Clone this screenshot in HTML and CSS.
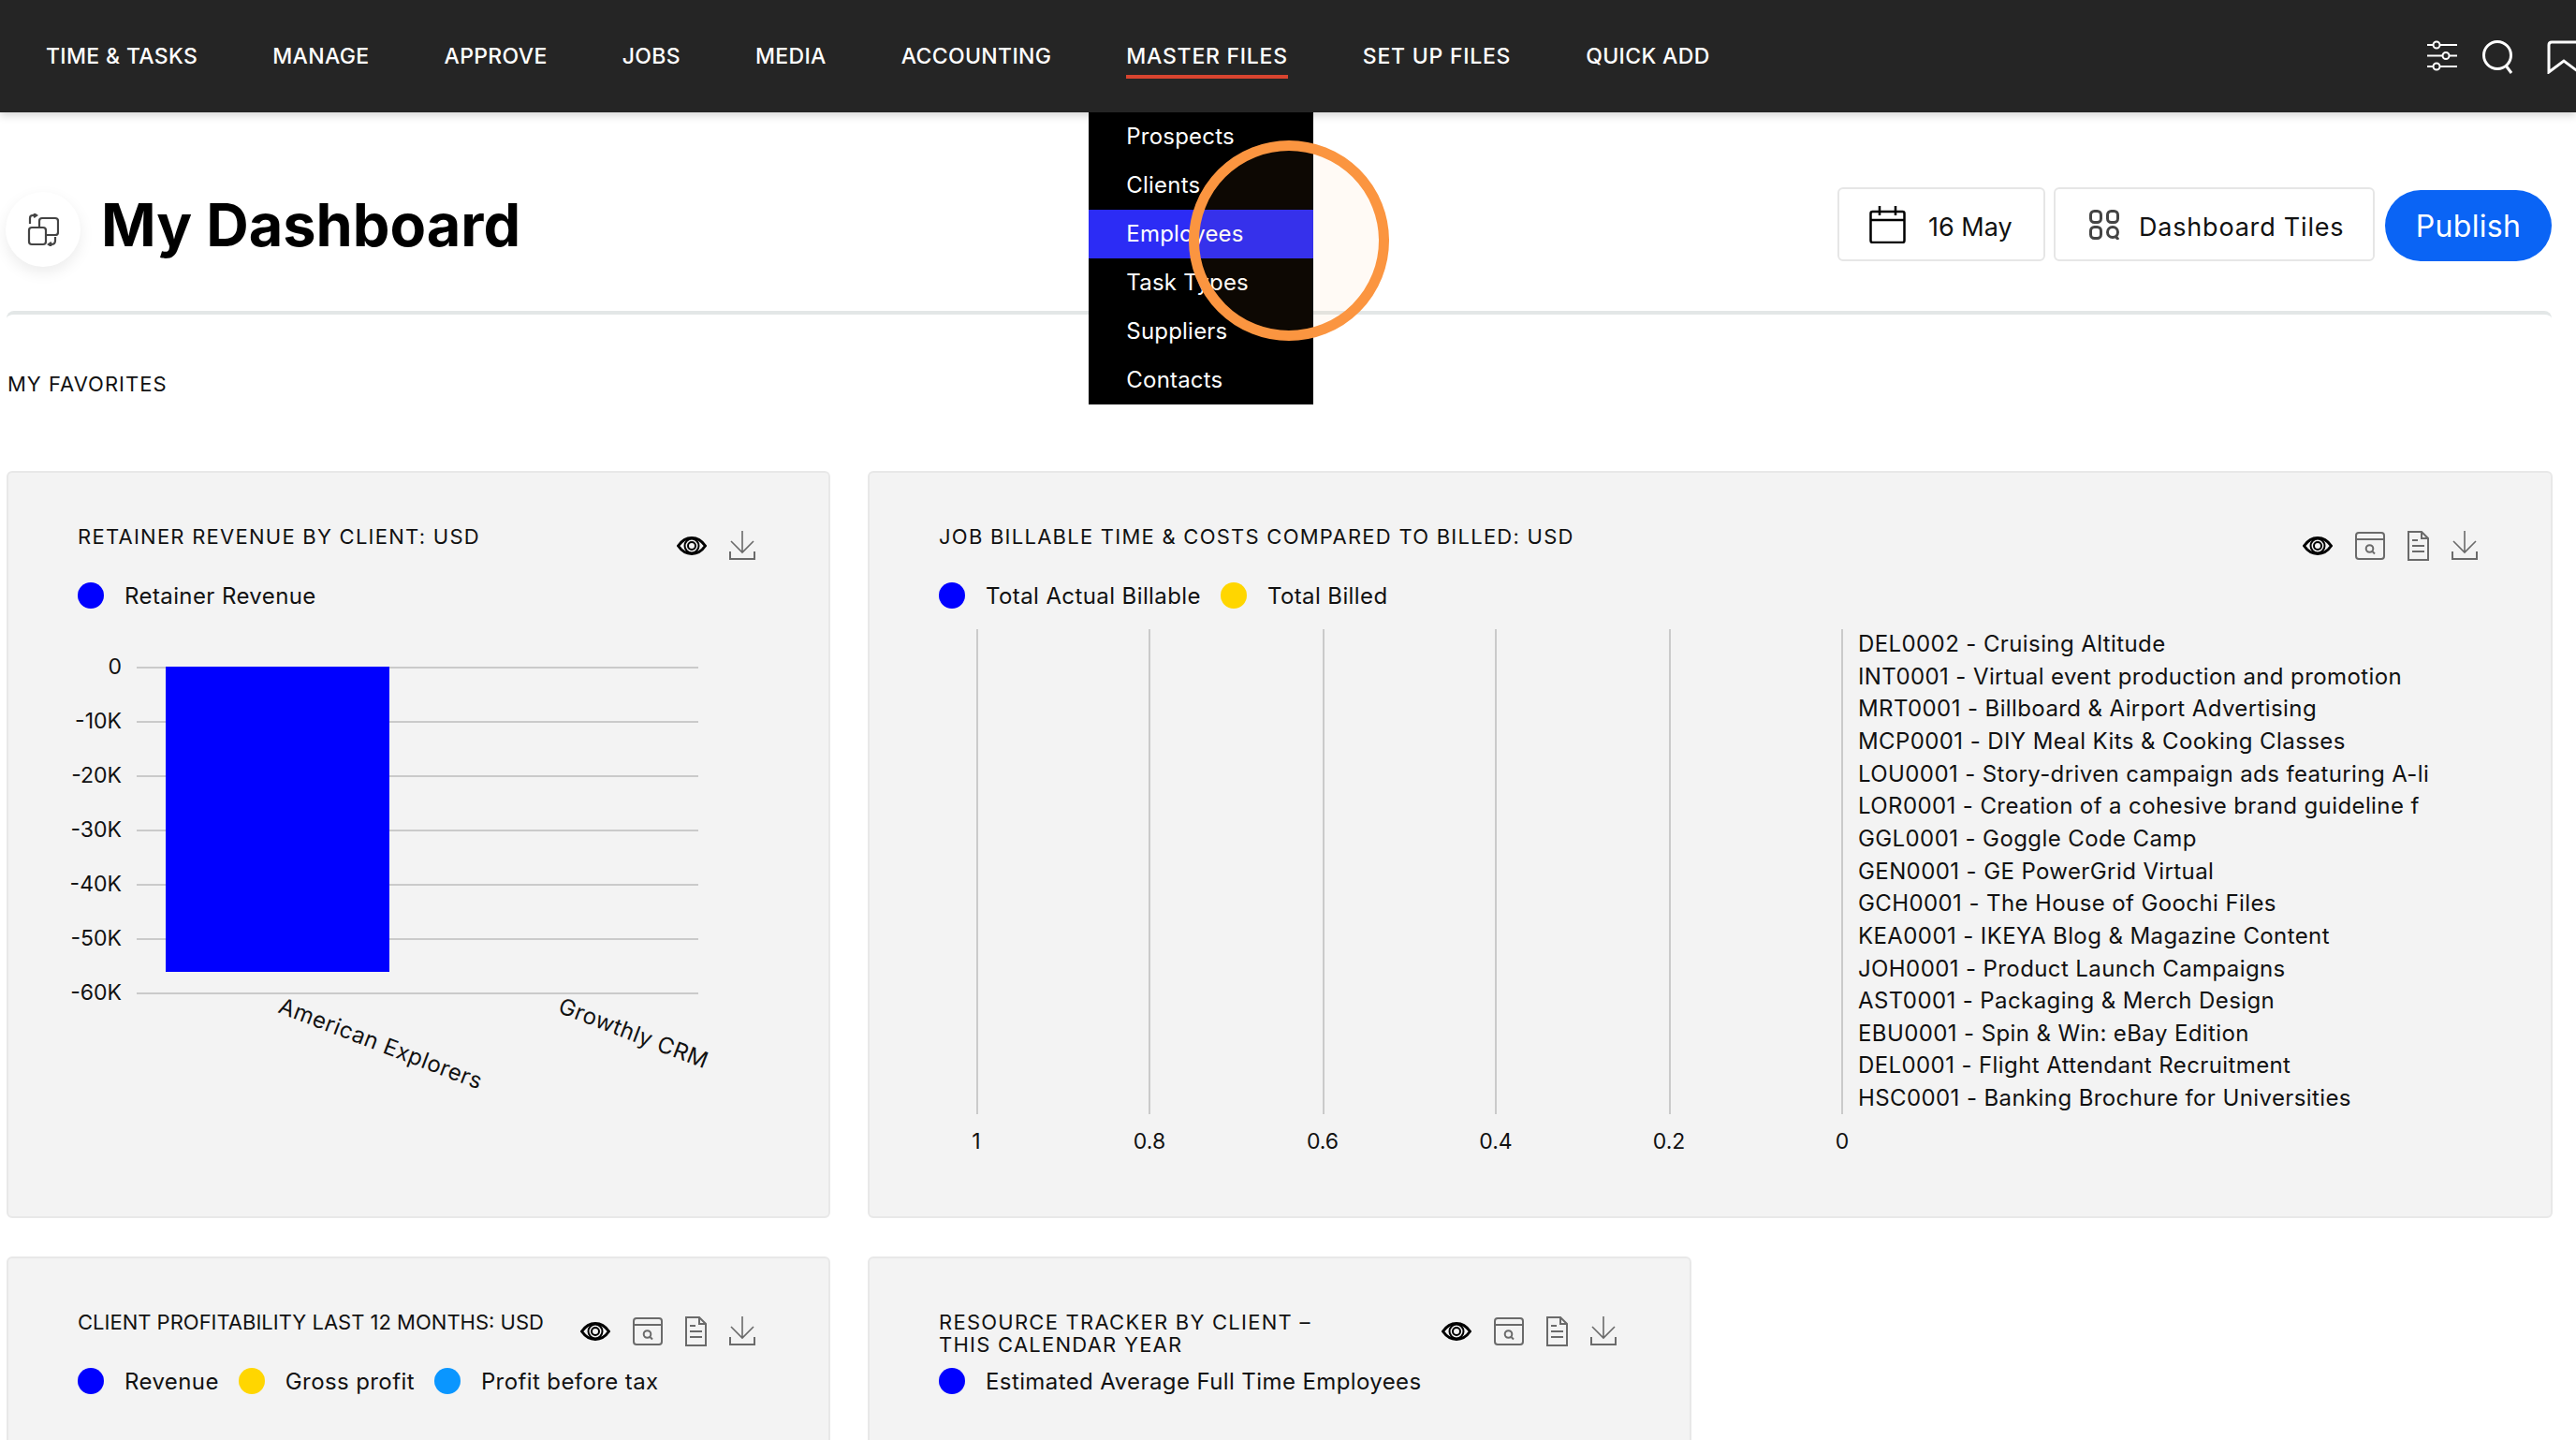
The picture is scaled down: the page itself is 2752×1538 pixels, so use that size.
FILE: index.html
```html
<!DOCTYPE html>
<html lang="en">
<head>
    <meta charset="UTF-8">
    <title>My Dashboard</title>
    <link rel="stylesheet" href="styles.css">
</head>
<body>
    <svg class="sprite">
        <symbol id="i-eye" viewBox="0 0 32 20">
            <path d="M1.5 10C6 3.5 11 1.5 16 1.5S26 3.5 30.500 10C26 16.500 21 18.500 16 18.500S6 16.500 1.500 10Z" fill="none" stroke="#000" stroke-width="3"/>
            <circle cx="16" cy="10" r="7.500" fill="none" stroke="#000" stroke-width="2"/>
            <circle cx="16" cy="10" r="4" fill="none" stroke="#000" stroke-width="2"/>
        </symbol>
        <symbol id="i-browser" viewBox="0 0 32 30">
            <rect x="1" y="1" width="30" height="28" rx="3" fill="none" stroke="#6a6a6a" stroke-width="2"/>
            <path d="M1 8H31" stroke="#6a6a6a" stroke-width="2"/>
            <circle cx="15.500" cy="18" r="3.800" fill="none" stroke="#6a6a6a" stroke-width="2"/>
            <path d="M18.500 21L21 23.500" stroke="#6a6a6a" stroke-width="2"/>
        </symbol>
        <symbol id="i-doc" viewBox="0 0 23 32">
            <path d="M1 1H15L22 8V31H1Z M15 1V8H22" fill="none" stroke="#6a6a6a" stroke-width="2"/>
            <path d="M5 10H11M5 16H18M5 22H18" stroke="#6a6a6a" stroke-width="2"/>
        </symbol>
        <symbol id="i-down" viewBox="0 0 28 31">
            <path d="M14 0V22M2 11L14 23L26 11" fill="none" stroke="#6a6a6a" stroke-width="1.600"/>
            <path d="M1 22V30H27V22" fill="none" stroke="#6a6a6a" stroke-width="2"/>
        </symbol>
    </svg>

    <nav class="topnav">
        <a class="nav-link">TIME &amp; TASKS</a>
        <a class="nav-link">MANAGE</a>
        <a class="nav-link">APPROVE</a>
        <a class="nav-link">JOBS</a>
        <a class="nav-link">MEDIA</a>
        <a class="nav-link">ACCOUNTING</a>
        <a class="nav-link active">MASTER FILES
            <ul class="dropdown">
                <li>Prospects</li>
                <li>Clients</li>
                <li class="selected">Employees</li>
                <li>Task Types</li>
                <li>Suppliers</li>
                <li>Contacts</li>
            </ul>
        </a>
        <a class="nav-link wider">SET UP FILES</a>
        <a class="nav-link">QUICK ADD</a>
        <div class="nav-tools">
            <svg width="32" height="33" viewBox="0 0 32 33" fill="none" stroke="#fff" stroke-width="2">
                <path d="M0 5H6M14 5H32M0 16.500H16M24 16.500H32M0 28H6M14 28H32"/>
                <circle cx="10" cy="5" r="3.500"/>
                <circle cx="20" cy="16.500" r="3.500"/>
                <circle cx="10" cy="28" r="3.500"/>
            </svg>
            <svg width="35" height="36" viewBox="0 0 35 36" fill="none" stroke="#fff" stroke-width="3">
                <circle cx="16" cy="16" r="14.500"/>
                <path d="M25 27L31 35"/>
            </svg>
            <svg class="bookmark" width="36" height="36" viewBox="0 0 36 36" fill="none" stroke="#fff" stroke-width="3">
                <path d="M2 34V5Q2 2 5 2H31Q34 2 34 5V34L18 22Z"/>
            </svg>
        </div>
    </nav>

    <main class="page">
        <header class="title-row">
            <div class="title-icon">
                <svg width="34" height="35" viewBox="0 0 34 35" fill="none" stroke="#444" stroke-width="2.200">
                    <rect x="13" y="5" width="20" height="18" rx="3"/>
                    <rect x="2" y="15" width="18" height="18" rx="3" fill="#fff"/>
                    <path d="M3 11V5Q3 2 6 2H9M7 0L10 2L7 4"/>
                    <path d="M30 25V29Q30 33 26 33H23M26 31L23 33L26 35"/>
                </svg>
            </div>
            <h1>My Dashboard</h1>
            <div class="title-actions">
                <button class="tool-btn date-btn">
                    <svg width="39" height="40" viewBox="0 0 39 40" fill="none" stroke="#000" stroke-width="2.500">
                        <rect x="1.500" y="6" width="36" height="33" rx="2"/>
                        <path d="M1.500 15H37.500M11 0V10M28 0V10"/>
                    </svg>
                    <span>16 May</span>
                </button>
                <button class="tool-btn tiles-btn">
                    <svg width="32" height="32" viewBox="0 0 32 32" fill="none" stroke="#444" stroke-width="3">
                        <rect x="1.500" y="1.500" width="11" height="12" rx="4"/>
                        <rect x="19.500" y="1.500" width="11" height="12" rx="4"/>
                        <rect x="1.500" y="18.500" width="11" height="12" rx="4"/>
                        <circle cx="25" cy="24" r="5.500"/>
                        <path d="M28 28L31 32"/>
                    </svg>
                    <span>Dashboard Tiles</span>
                </button>
                <button class="publish-btn">Publish</button>
            </div>
        </header>
        <div class="divider"></div>

        <h2 class="section-name">MY FAVORITES</h2>

        <section class="tiles">
            <article class="card">
                <div class="card-head">
                    <h3>RETAINER REVENUE BY CLIENT: USD</h3>
                    <div class="card-icons">
                        <svg class="eye"><use href="#i-eye"/></svg>
                        <svg class="down"><use href="#i-down"/></svg>
                    </div>
                </div>
                <div class="legend">
                    <span class="dot blue"></span><span>Retainer Revenue</span>
                </div>
                <svg class="chart" width="780" height="630" viewBox="83 650 780 630">
                    <g class="grid">
                        <path d="M146 713H746M146 771H746M146 829H746M146 887H746M146 945H746M146 1003H746M146 1061H746"/>
                    </g>
                    <rect x="177" y="712" width="239" height="326" fill="#0000ff"/>
                    <g class="axis" text-anchor="end">
                        <text x="130" y="720">0</text>
                        <text x="130" y="778">-10K</text>
                        <text x="130" y="836">-20K</text>
                        <text x="130" y="894">-30K</text>
                        <text x="130" y="952">-40K</text>
                        <text x="130" y="1010">-50K</text>
                        <text x="130" y="1068">-60K</text>
                    </g>
                    <g class="tilted">
                        <text transform="translate(296 1081) rotate(21)">American Explorers</text>
                        <text transform="translate(595 1081) rotate(21)">Growthly CRM</text>
                    </g>
                </svg>
            </article>

            <article class="card wide">
                <div class="card-head">
                    <h3>JOB BILLABLE TIME &amp; COSTS COMPARED TO BILLED: USD</h3>
                    <div class="card-icons">
                        <svg class="eye"><use href="#i-eye"/></svg>
                        <svg class="browser"><use href="#i-browser"/></svg>
                        <svg class="doc"><use href="#i-doc"/></svg>
                        <svg class="down"><use href="#i-down"/></svg>
                    </div>
                </div>
                <div class="legend">
                    <span class="dot blue"></span><span>Total Actual Billable</span>
                    <span class="dot yellow"></span><span>Total Billed</span>
                </div>
                <svg class="chart" width="1640" height="630" viewBox="1003 650 1640 630">
                    <g class="grid">
                        <path d="M1044 672V1190M1228 672V1190M1414 672V1190M1598 672V1190M1784 672V1190M1968 672V1190"/>
                    </g>
                    <g class="axis" text-anchor="middle">
                        <text x="1043" y="1227">1</text>
                        <text x="1228" y="1227">0.8</text>
                        <text x="1413" y="1227">0.6</text>
                        <text x="1598" y="1227">0.4</text>
                        <text x="1783" y="1227">0.2</text>
                        <text x="1968" y="1227">0</text>
                    </g>
                    <g class="rows">
                        <text x="1985" y="696">DEL0002 - Cruising Altitude</text>
                        <text x="1985" y="731">INT0001 - Virtual event production and promotion</text>
                        <text x="1985" y="765">MRT0001 - Billboard &amp; Airport Advertising</text>
                        <text x="1985" y="800">MCP0001 - DIY Meal Kits &amp; Cooking Classes</text>
                        <text x="1985" y="835">LOU0001 - Story-driven campaign ads featuring A-li</text>
                        <text x="1985" y="869">LOR0001 - Creation of a cohesive brand guideline f</text>
                        <text x="1985" y="904">GGL0001 - Goggle Code Camp</text>
                        <text x="1985" y="939">GEN0001 - GE PowerGrid Virtual</text>
                        <text x="1985" y="973">GCH0001 - The House of Goochi Files</text>
                        <text x="1985" y="1008">KEA0001 - IKEYA Blog &amp; Magazine Content</text>
                        <text x="1985" y="1043">JOH0001 - Product Launch Campaigns</text>
                        <text x="1985" y="1077">AST0001 - Packaging &amp; Merch Design</text>
                        <text x="1985" y="1112">EBU0001 - Spin &amp; Win: eBay Edition</text>
                        <text x="1985" y="1146">DEL0001 - Flight Attendant Recruitment</text>
                        <text x="1985" y="1181">HSC0001 - Banking Brochure for Universities</text>
                    </g>
                </svg>
            </article>

            <article class="card">
                <div class="card-head">
                    <h3 class="tight">CLIENT PROFITABILITY LAST 12 MONTHS: USD</h3>
                    <div class="card-icons">
                        <svg class="eye"><use href="#i-eye"/></svg>
                        <svg class="browser"><use href="#i-browser"/></svg>
                        <svg class="doc"><use href="#i-doc"/></svg>
                        <svg class="down"><use href="#i-down"/></svg>
                    </div>
                </div>
                <div class="legend">
                    <span class="dot blue"></span><span>Revenue</span>
                    <span class="dot yellow"></span><span>Gross profit</span>
                    <span class="dot sky"></span><span>Profit before tax</span>
                </div>
            </article>

            <article class="card">
                <div class="card-head">
                    <h3>RESOURCE TRACKER BY CLIENT –<br>THIS CALENDAR YEAR</h3>
                    <div class="card-icons">
                        <svg class="eye"><use href="#i-eye"/></svg>
                        <svg class="browser"><use href="#i-browser"/></svg>
                        <svg class="doc"><use href="#i-doc"/></svg>
                        <svg class="down"><use href="#i-down"/></svg>
                    </div>
                </div>
                <div class="legend">
                    <span class="dot blue"></span><span>Estimated Average Full Time Employees</span>
                </div>
            </article>
        </section>
    </main>

    <div class="click-ring"></div>
</body>
</html>
```
FILE: styles.css
```css
* {
    box-sizing: border-box;
}
html, body {
    height: 100%;
    overflow: hidden;
}
body {
    margin: 0;
    font-family: Inter, "Noto Sans", sans-serif;
    color: #111;
    background: #fff;
}
.sprite {
    display: none;
}

/* top bar */
.topnav {
    position: relative;
    z-index: 2;
    display: flex;
    gap: 80px;
    height: 120px;
    padding: 46px 0 0 49px;
    background: #252525;
    box-shadow: 0 4px 8px rgba(0, 0, 0, 0.15);
}
.nav-link {
    position: relative;
    height: 38px;
    font-size: 23px;
    font-weight: 500;
    letter-spacing: 0.35px;
    line-height: 28px;
    color: #fff;
    white-space: nowrap;
    border-bottom: 4px solid transparent;
}
.nav-link.active,
.nav-link.wider {
    letter-spacing: 0.75px;
}
.nav-link.active {
    border-bottom-color: #d9442f;
}
.dropdown {
    position: absolute;
    top: 74px;
    left: -40px;
    width: 240px;
    margin: 0;
    padding: 0;
    list-style: none;
    background: #000;
    font-size: 24px;
    font-weight: 400;
    letter-spacing: 0.2px;
}
.dropdown li {
    height: 52px;
    padding-left: 40px;
    line-height: 52px;
}
.dropdown .selected {
    background: #2c2cf5;
}
.nav-tools {
    display: flex;
    gap: 27px;
    width: 159px;
    margin: -3px 0 0 auto;
    overflow: hidden;
    align-items: flex-start;
    flex-shrink: 0;
}
.nav-tools svg {
    flex-shrink: 0;
}
.nav-tools .bookmark {
    margin-left: 7px;
}

/* page header */
.page {
    padding: 0 26px 0 7px;
}
.title-row {
    display: flex;
    align-items: center;
    height: 80px;
    margin-top: 85px;
}
.title-icon {
    display: flex;
    align-items: center;
    justify-content: center;
    width: 80px;
    height: 80px;
    margin-left: -1px;
    border-radius: 50%;
    background: #fff;
    box-shadow: 0 6px 16px rgba(0, 0, 0, 0.08);
}
h1 {
    margin: 0 0 10px 22px;
    font-size: 63px;
    font-weight: 700;
    color: #000;
}
.title-actions {
    display: flex;
    gap: 9px;
    margin-left: auto;
    margin-top: -11px;
}
.tool-btn {
    display: flex;
    align-items: center;
    height: 79px;
    border: 2px solid #e6e6e6;
    border-radius: 6px;
    background: #fff;
    font-family: inherit;
    font-size: 27px;
    color: #111;
}
.tool-btn span {
    padding-top: 5px;
}
.date-btn {
    gap: 24px;
    width: 222px;
    padding: 0 0 0 32px;
}
.tiles-btn {
    gap: 21px;
    width: 343px;
    padding: 0 0 0 36px;
    letter-spacing: 0.8px;
}
.publish-btn {
    width: 178px;
    height: 76px;
    margin: 3px 0 0 2px;
    border: 0;
    border-radius: 38px;
    background: #0a64f5;
    font-family: inherit;
    font-size: 32px;
    letter-spacing: 0.3px;
    color: #fff;
}
.divider {
    height: 12px;
    margin-top: 47px;
    border-top: 4px solid #e3e7e7;
    border-radius: 8px 8px 0 0;
}
.section-name {
    margin: 52px 0 0 1px;
    font-size: 22px;
    font-weight: 400;
    letter-spacing: 1px;
    line-height: 28px;
}

/* tiles */
.tiles {
    display: grid;
    grid-template-columns: 880px 880px 880px;
    grid-auto-rows: 798px;
    gap: 41px 40px;
    margin-top: 79px;
}
.card {
    padding: 56px 78px 0 74px;
    border: 2px solid #e8e8e8;
    border-radius: 6px;
    background: #f3f3f3;
}
.card.wide {
    grid-column: span 2;
}
.card-head {
    display: flex;
    justify-content: space-between;
    height: 38px;
}
.card h3 {
    margin: 0;
    font-size: 22px;
    font-weight: 400;
    letter-spacing: 1.25px;
    line-height: 24px;
}
.card h3.tight {
    letter-spacing: 0;
}
.card-icons {
    display: flex;
    gap: 24px;
    align-items: center;
    height: 31px;
    margin-top: 6px;
}
.eye {
    width: 32px;
    height: 20px;
}
.browser {
    width: 32px;
    height: 30px;
}
.doc {
    width: 23px;
    height: 32px;
}
.down {
    width: 28px;
    height: 31px;
}
.legend {
    display: flex;
    align-items: center;
    height: 28px;
    margin-top: 23px;
    font-size: 24px;
    letter-spacing: 0.4px;
}
.legend span + span {
    margin-left: 22px;
}
.legend .dot {
    flex-shrink: 0;
    width: 28px;
    height: 28px;
    border-radius: 50%;
}
.legend span + .dot {
    margin-left: 21px;
}
.blue {
    background: #0000ff;
}
.yellow {
    background: #ffd600;
}
.sky {
    background: #0a96ff;
}

/* charts */
.chart {
    display: block;
    overflow: visible;
    font-family: Inter, "Noto Sans", sans-serif;
    fill: #111;
}
.grid path {
    fill: none;
    stroke: #cacaca;
    stroke-width: 2;
}
.axis {
    font-size: 23px;
}
.tilted {
    font-size: 24px;
    letter-spacing: 0.5px;
}
.rows {
    font-size: 24px;
    letter-spacing: 0.4px;
}

/* click marker from the screen recording */
.click-ring {
    position: absolute;
    top: 150px;
    left: 1270px;
    z-index: 3;
    width: 214px;
    height: 214px;
    border: 11px solid #fb9540;
    border-radius: 50%;
    background: rgba(255, 150, 60, 0.05);
}
```
